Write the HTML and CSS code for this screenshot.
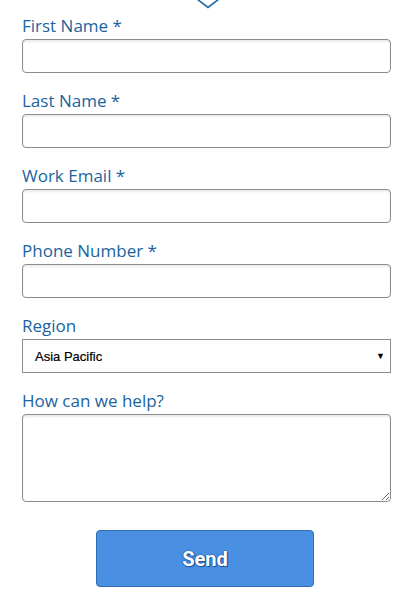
FILE: index.html
```html
<!DOCTYPE html>
<html>
<head>
<meta charset="utf-8">
<link rel="stylesheet" href="styles.css">
</head>
<body>
<div class="page">
  <div class="chevron">
    <svg width="24" height="10" viewBox="0 0 24 10"><polyline points="1,0 12,8.5 23,0" fill="none" stroke="#1b6aa5" stroke-width="1.6"/></svg>
  </div>
  <form class="form">
    <div class="field">
      <label class="label">First Name *</label>
      <input class="input" type="text">
    </div>
    <div class="field">
      <label class="label">Last Name *</label>
      <input class="input" type="text">
    </div>
    <div class="field">
      <label class="label">Work Email *</label>
      <input class="input" type="text">
    </div>
    <div class="field">
      <label class="label">Phone Number *</label>
      <input class="input" type="text">
    </div>
    <div class="field">
      <label class="label">Region</label>
      <div class="select">
        <span class="select-text">Asia Pacific</span>
        <span class="select-arrow">▼</span>
      </div>
    </div>
    <div class="field">
      <label class="label">How can we help?</label>
      <textarea class="textarea"></textarea>
    </div>
    <div class="actions">
      <button class="send" type="button">Send</button>
    </div>
  </form>
</div>
</body>
</html>
```

FILE: styles.css
```css
html, body {
  margin: 0;
  padding: 0;
  background: #ffffff;
}
.page {
  width: 400px;
  padding: 0 9px 0 22px;
  box-sizing: border-box;
}
.chevron {
  height: 9px;
  display: flex;
  padding-left: 174px;
}
.chevron svg {
  display: block;
  margin-top: -1px;
}
.form {
  display: flex;
  flex-direction: column;
  gap: 16px;
  padding-top: 5px;
}
.field {
  display: flex;
  flex-direction: column;
  gap: 2px;
}
.label {
  font-family: "Open Sans", sans-serif;
  font-size: 17px;
  line-height: 22px;
  padding-top: 1px;
  color: #1a63a0;
}
.input {
  box-sizing: border-box;
  width: 369px;
  height: 34px;
  margin: 0;
  border: 1px solid #8c8c8c;
  border-radius: 4px;
  box-shadow: inset 0 2px 2px rgba(0,0,0,0.08);
  background: #fff;
  outline: none;
}
.select {
  box-sizing: border-box;
  width: 369px;
  height: 34px;
  border: 1px solid #8c8c8c;
  display: flex;
  align-items: center;
  justify-content: space-between;
  padding: 0 5px 0 12px;
  font-family: "Liberation Sans", Arial, sans-serif;
  font-size: 13px;
  color: #000;
}
.select-text {
  padding-top: 1px;
  -webkit-text-stroke: 0.2px #000;
}
.select-arrow {
  font-size: 9px;
  line-height: 1;
}
.textarea {
  box-sizing: border-box;
  width: 369px;
  height: 88px;
  margin: 0;
  border: 1px solid #8c8c8c;
  border-radius: 4px;
  box-shadow: inset 0 2px 2px rgba(0,0,0,0.08);
  background: #fff;
  resize: both;
  outline: none;
  display: block;
}
.actions {
  display: flex;
  padding-left: 74px;
  padding-top: 12px;
}
.send {
  width: 218px;
  height: 57px;
  background: #4a90e2;
  border: 1px solid #2e6cb3;
  border-radius: 4px;
  color: #ffffff;
  font-family: Roboto, "Liberation Sans", sans-serif;
  font-weight: bold;
  font-size: 20px;
  text-shadow: 0 0 1px #1a4f9a, 0 0 1px #1a4f9a, 0 0 1px #1a4f9a, 1px 1px 1px #1a4f9a;
  cursor: pointer;
}
```
